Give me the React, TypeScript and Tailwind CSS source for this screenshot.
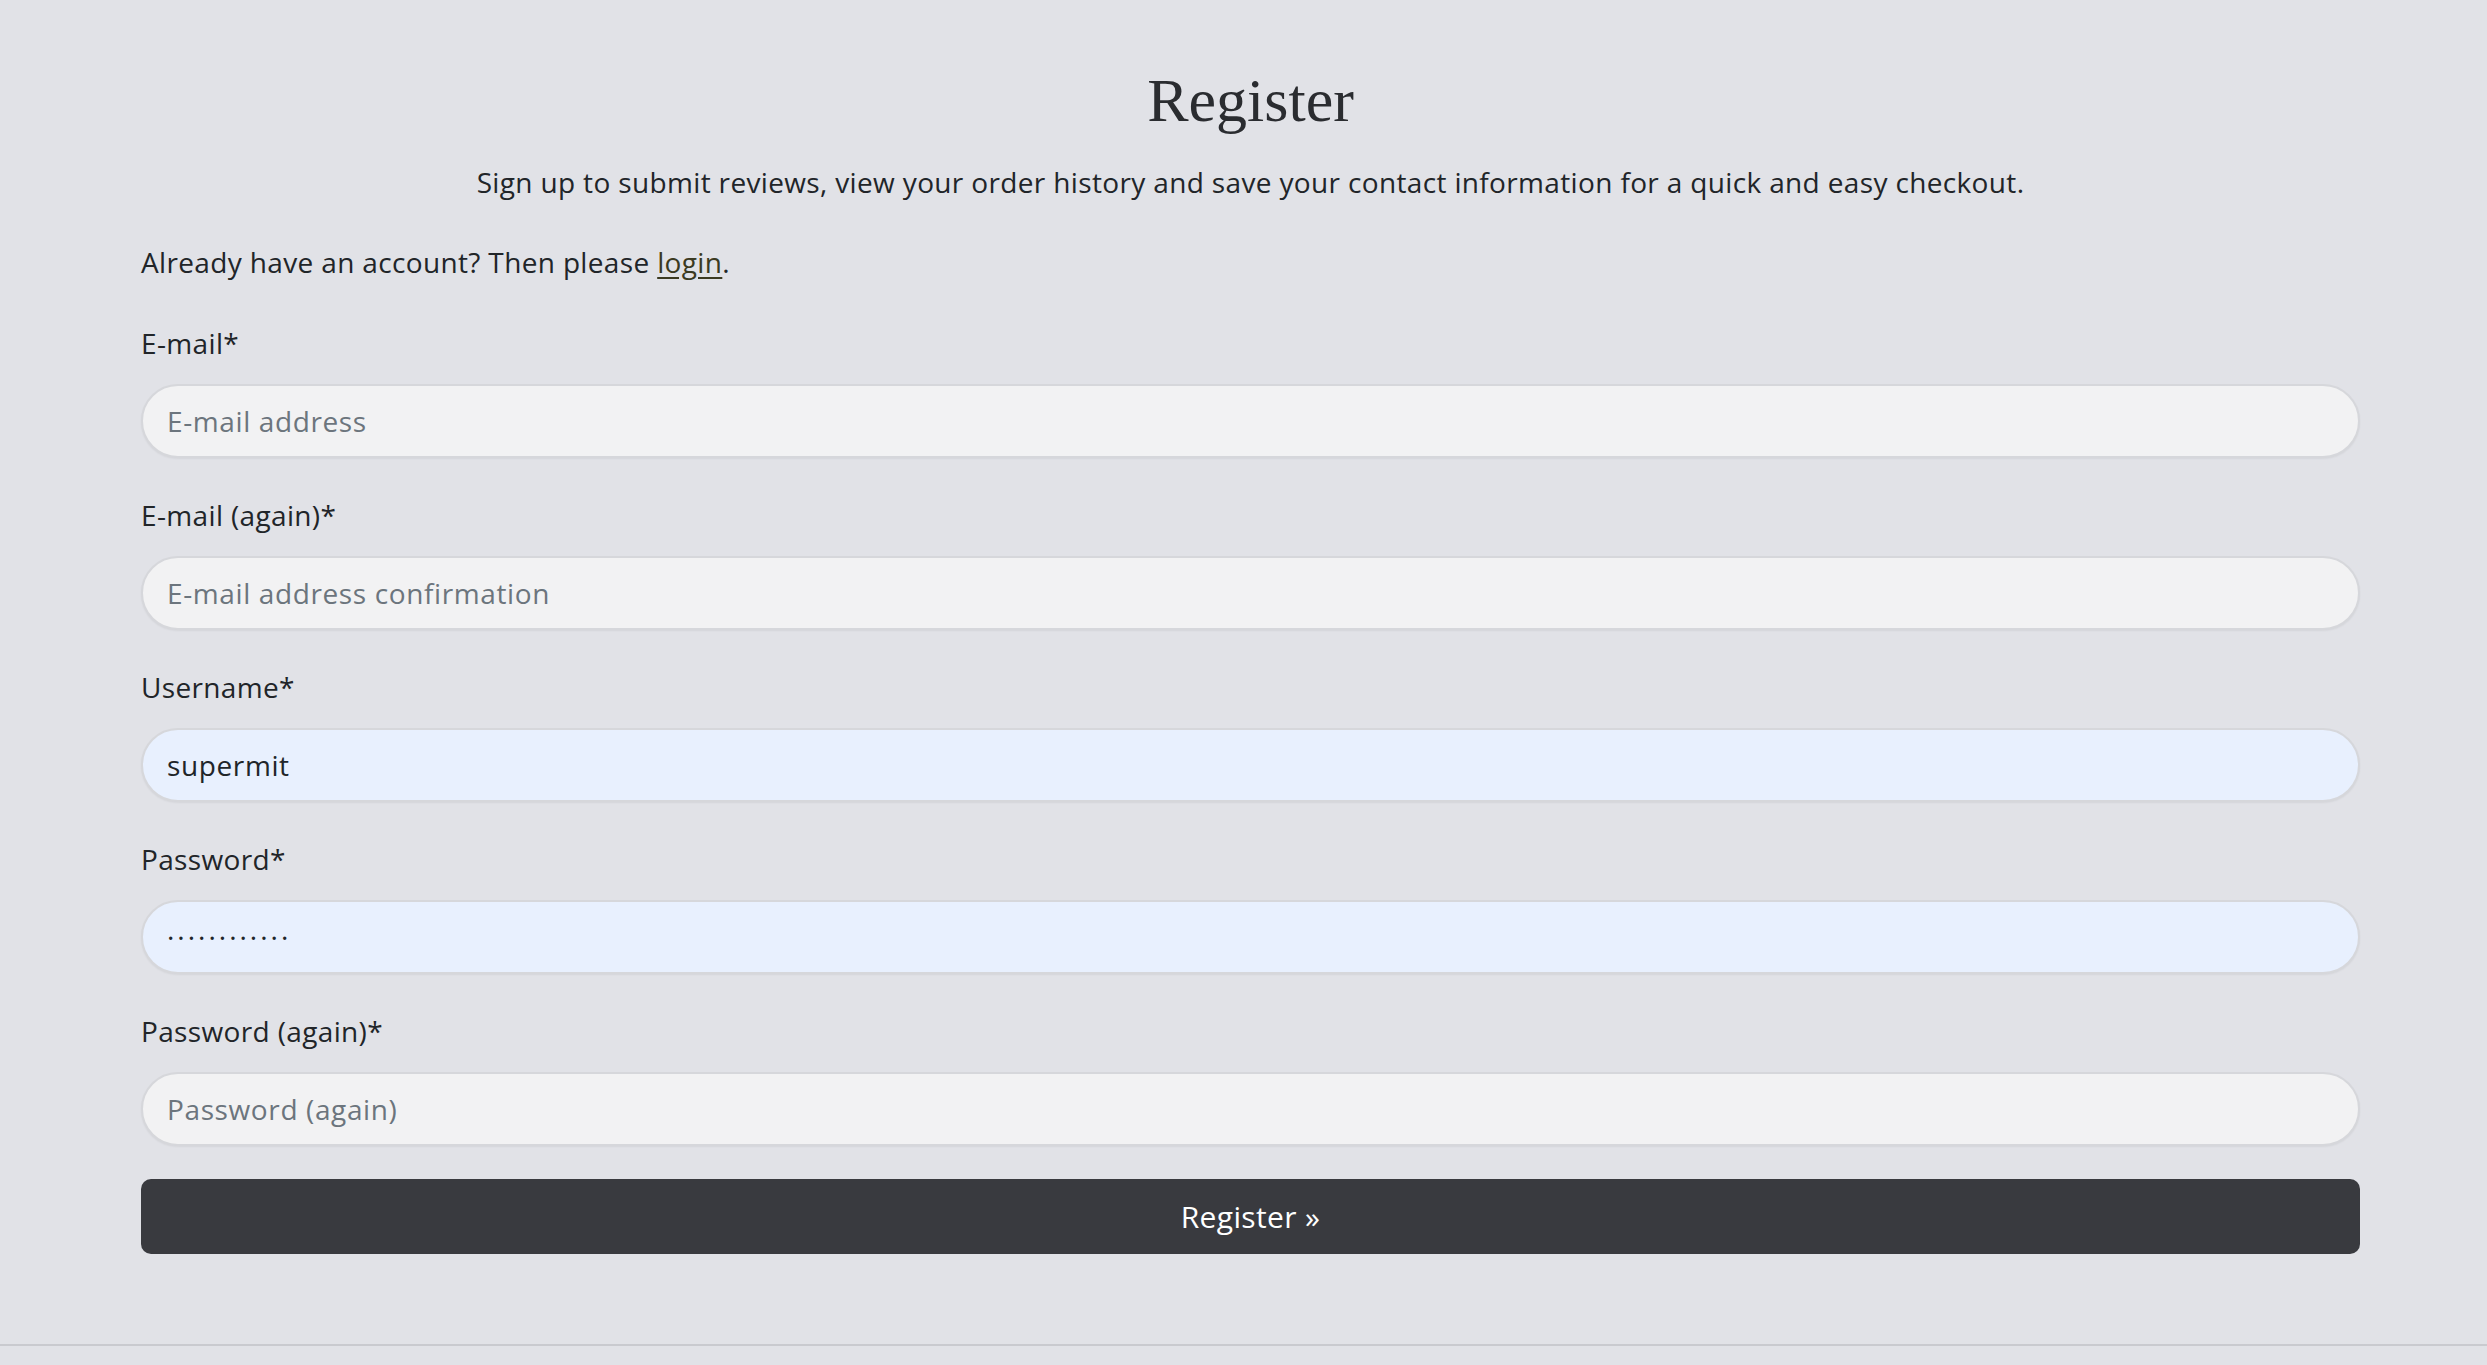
import React from "react";

const bodyFont = "font-['Open_Sans','Noto_Sans',sans-serif] tracking-[0.022em]";

interface FieldProps {
  label: string;
  placeholder: string;
  value?: string;
  filled?: boolean;
  secret?: boolean;
}

function Field({ label, placeholder, value, filled, secret }: FieldProps) {
  return (
    <div className="mb-[36px] flex flex-col">
      <label className="mb-[20px] text-[28px] leading-[42px] text-[#212529]">{label}</label>
      <input
        readOnly
        value={value ?? ""}
        placeholder={placeholder}
        className={`h-[74px] w-full rounded-full border-2 border-[#d6d7db] px-[24px] text-[28px] text-[#212529] shadow-[0_1px_2px_rgba(0,0,0,0.06)] outline-none placeholder:text-[#6c757d] ${
          filled ? "bg-[#e8f0fe]" : "bg-[#f2f2f3]"
        } ${bodyFont} ${secret ? "tracking-[3px]" : ""}`}
      />
    </div>
  );
}

export default function App() {
  return (
    <div className={`min-h-[1365px] w-full bg-[#e1e2e7] ${bodyFont}`}>
      <div className="ml-[141px] w-[2219px] pt-[63px]">
        <h1 className="text-center font-['Liberation_Serif',serif] text-[62px] font-normal leading-[74px] tracking-normal text-[#2a2c30]">
          Register
        </h1>
        <p className="mt-[24px] text-center text-[28px] leading-[42px] text-[#212529]">
          Sign up to submit reviews, view your order history and save your contact information for a quick and easy
          checkout.
        </p>
        <p className="mt-[38px] text-[28px] leading-[42px] text-[#212529]">
          Already have an account? Then please{" "}
          <a href="#" className="text-[#3b3a22] underline underline-offset-4">
            login
          </a>
          .
        </p>

        <form className="mt-[39px]">
          <Field label="E-mail*" placeholder="E-mail address" />
          <Field label="E-mail (again)*" placeholder="E-mail address confirmation" />
          <Field label="Username*" placeholder="Username" value="supermit" filled />
          <Field label="Password*" placeholder="Password" value="············" filled secret />
          <div className="flex flex-col">
            <label className="mb-[20px] text-[28px] leading-[42px] text-[#212529]">Password (again)*</label>
            <input
              readOnly
              placeholder="Password (again)"
              className={`h-[74px] w-full rounded-full border-2 border-[#d6d7db] bg-[#f2f2f3] px-[24px] text-[28px] text-[#212529] shadow-[0_1px_2px_rgba(0,0,0,0.06)] outline-none placeholder:text-[#6c757d] ${bodyFont}`}
            />
          </div>
          <button
            type="button"
            className="mt-[33px] h-[75px] w-full rounded-[10px] bg-[#393a3f] text-[30px] text-white"
          >
            Register »
          </button>
        </form>
      </div>
      <div className="mt-[90px] h-[2px] w-full bg-[#c9cacf]" />
    </div>
  );
}
